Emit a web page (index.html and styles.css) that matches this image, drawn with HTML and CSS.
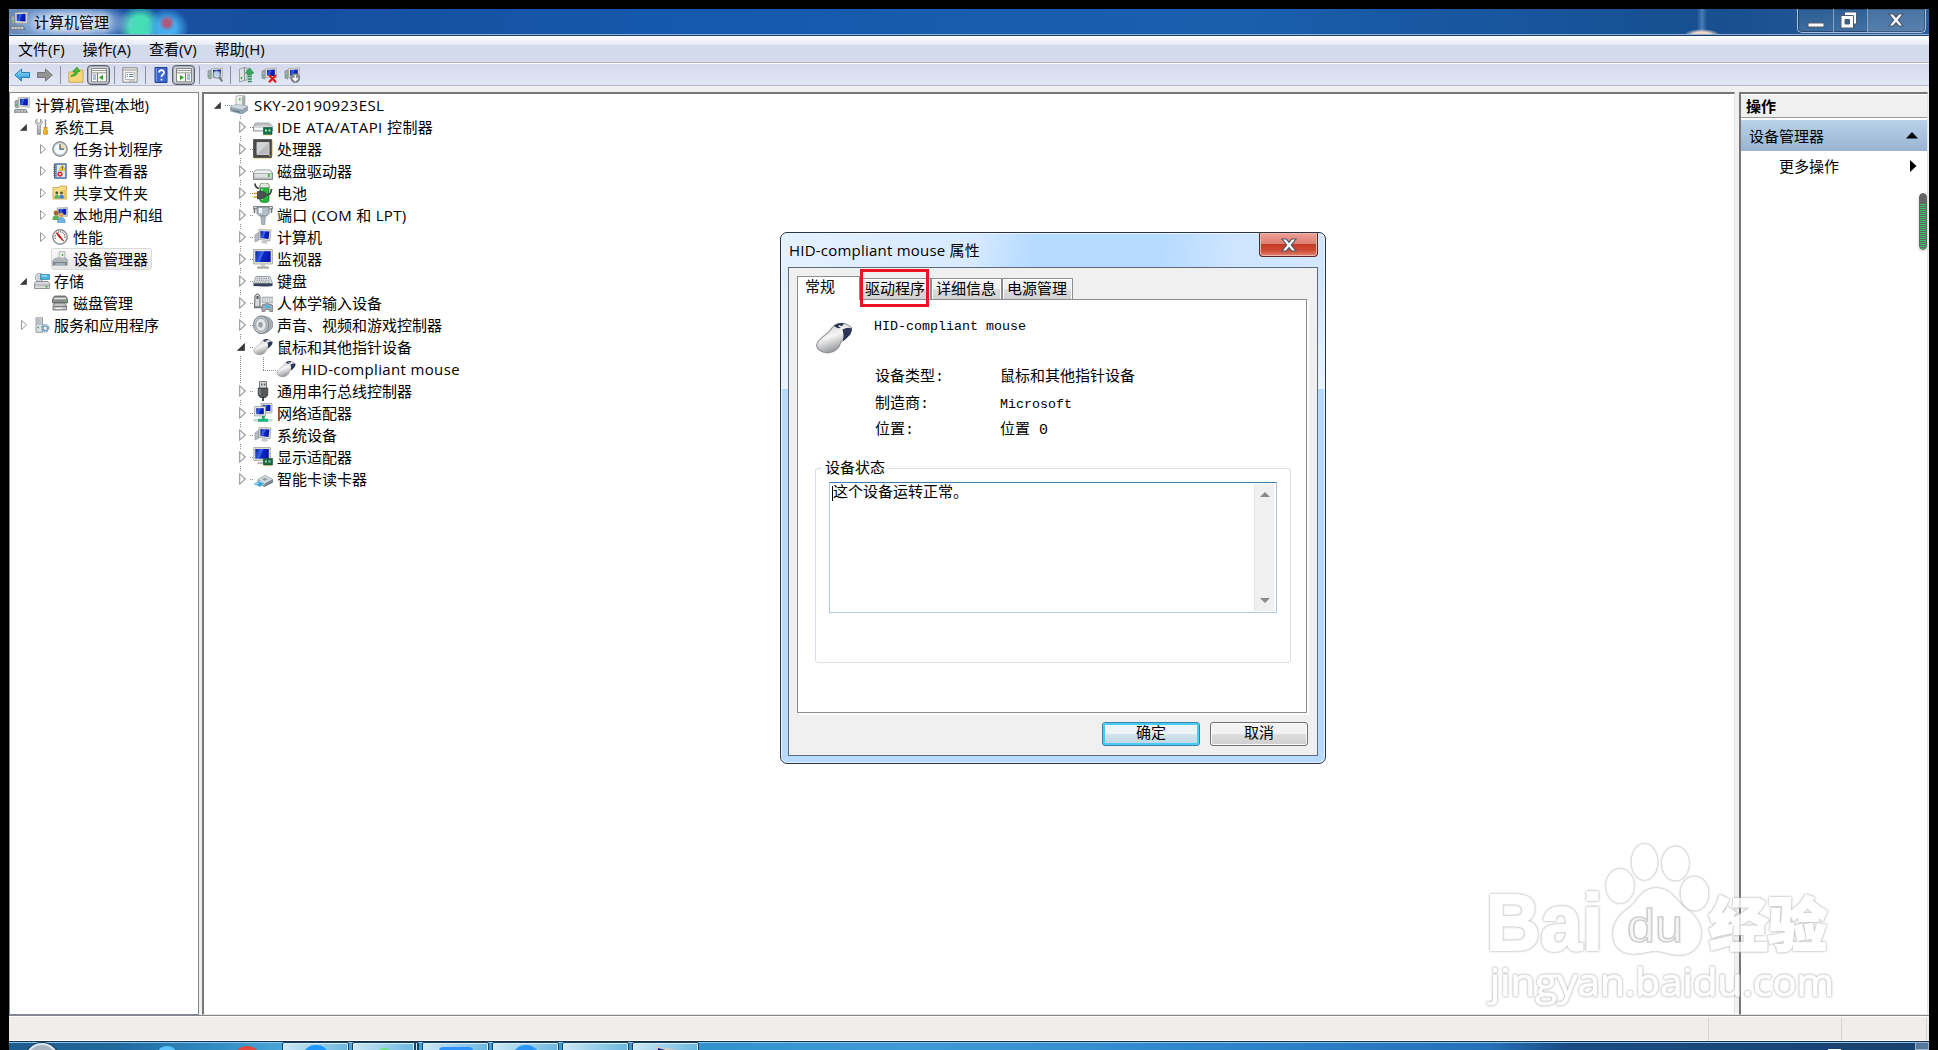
FILE: index.html
```html
<!DOCTYPE html>
<html lang="zh-CN">
<head>
    <meta charset="UTF-8">
    <title>计算机管理</title>
    <link rel="stylesheet" href="styles.css">
</head>
<body>
    <svg class="defs" width="0" height="0">
        <defs>
            <linearGradient id="gBlue" x1="0" y1="0" x2="1" y2="0.3"><stop offset="0" stop-color="#0a1a9c"/><stop offset="0.5" stop-color="#3a6cf0"/><stop offset="0.55" stop-color="#1028c8"/><stop offset="1" stop-color="#0818a8"/></linearGradient>
            <linearGradient id="gGrey" x1="0" y1="0" x2="0" y2="1"><stop offset="0" stop-color="#f4f4f4"/><stop offset="1" stop-color="#9c9fa3"/></linearGradient>
            <linearGradient id="gMouse" x1="0.2" y1="0" x2="0.6" y2="1"><stop offset="0" stop-color="#c9cacc"/><stop offset="0.45" stop-color="#f6f6f6"/><stop offset="1" stop-color="#85878c"/></linearGradient>
            <linearGradient id="gArrow" x1="0" y1="0" x2="0" y2="1"><stop offset="0" stop-color="#9fe0fb"/><stop offset="1" stop-color="#1a8fd6"/></linearGradient>
        </defs>
        <symbol id="computer" viewBox="0 0 16 16">
            <path d="M1 4l3-1v8l-3-1z" fill="#a8b0b8" stroke="#6d747c" stroke-width=".6"/><path d="M1.5 8h1.5" stroke="#3fc23f" stroke-width="1.4"/>
            <path d="M4.5.6L15.4 0v10.3l-10.9-.6z" fill="#dcdcd4" stroke="#9a9a92" stroke-width=".6"/>
            <path d="M6 2l7.8-.4v6.8L6 8z" fill="url(#gBlue)"/>
            <path d="M1 12.6h11l1.4 3H0z" fill="#8d9499" stroke="#60676c" stroke-width=".6"/><path d="M1.5 13.6h10.6M1.2 14.8h11.2" stroke="#dfe3e6" stroke-width=".7" stroke-dasharray="2 .8"/>
        </symbol>
        <symbol id="system" viewBox="0 0 20 20">
            <path d="M2 8l4-3v8l-4 2z" fill="#b6bcc4" stroke="#868d95" stroke-width=".6"/>
            <path d="M6 2.4L18 3l-1 11-11-1.6z" fill="#dcdcda" stroke="#a0a09c" stroke-width=".7"/>
            <path d="M7.4 4l9 .5-.8 7.5-8.2-1.1z" fill="url(#gBlue)"/><path d="M9 13.5l5 .7 1 2-4 .6-3-1.4z" fill="#c4c8cc"/>
        </symbol>
        <symbol id="tools" viewBox="0 0 16 16">
            <path d="M3 0C1 1 1 5 3.4 6v9.4h3V6C9 5 8.600 1 6.500 0v3.500l-1.700.8L3 3.500z" fill="url(#gGrey)" stroke="#7d8084" stroke-width=".7"/>
            <path d="M11.500.5v8" stroke="#8b8f94" stroke-width="1.400"/><path d="M9.800 8.500h3.500l-.5 2 .7 1v3.500q-2 1.500-4 0v-3.500l.8-1z" fill="#f2b21c" stroke="#b87a08" stroke-width=".6"/>
        </symbol>
        <symbol id="clock" viewBox="0 0 16 16">
            <circle cx="8" cy="8" r="7.300" fill="#b8bcc0" stroke="#7f8488" stroke-width="1"/><circle cx="8" cy="8" r="5.800" fill="#f4f9fd"/><path d="M8 8V2.500A5.500 5.500 0 0 1 13.500 8z" fill="#f3dca3"/><path d="M8 3v5.200h4" fill="none" stroke="#3c5a78" stroke-width="1.200"/>
        </symbol>
        <symbol id="events" viewBox="0 0 16 16">
            <path d="M2.500.8h11.700v14.500H2.500z" fill="#7ba0ce" stroke="#4b6c9a"/><path d="M5 2h8v12H5z" fill="#dce9f7"/><path d="M1.500 2.500h2m-2 2h2m-2 2h2m-2 2h2m-2 2h2m-2 2h2" stroke="#555" stroke-width=".9"/>
            <path d="M10.300 1.500L13.500 7.500H7z" fill="#ffd83a" stroke="#c79300" stroke-width=".5"/><path d="M10.400 3.700v2m0 .7v.7" stroke="#333"/><circle cx="8" cy="11" r="2.600" fill="#e02828"/><path d="M7 10l2 2m0-2l-2 2" stroke="#fff" stroke-width=".8"/>
        </symbol>
        <symbol id="shared" viewBox="0 0 16 16">
            <path d="M1 2.500h6l1-1.500h6.500v13H1z" fill="#f7dc88" stroke="#c99d3a" stroke-width=".8"/><path d="M11 4l4 1v9h-3z" fill="#eec75c"/>
            <circle cx="4.800" cy="7.800" r="1.400" fill="#4c4b35"/><circle cx="9.500" cy="7.800" r="1.400" fill="#4c4b35"/><path d="M2.500 13.500q0-4 2.300-4t2.300 4z" fill="#55b06a"/><path d="M7.300 13.500q0-4 2.300-4t2.300 4z" fill="#3f7fd0"/>
        </symbol>
        <symbol id="users" viewBox="0 0 16 16">
            <path d="M5 1l10.500-.6v9L5 9z" fill="#d8dad6" stroke="#999" stroke-width=".6"/><path d="M6.500 2.200l7.700-.4v6L6.500 7.600z" fill="url(#gBlue)"/>
            <circle cx="4" cy="6" r="2.400" fill="#a56a2c"/><circle cx="9.300" cy="8" r="2.400" fill="#d9a35a"/><path d="M.5 13q0-5 3.500-4.700T7.300 13z" fill="#5dae58"/><path d="M5.500 15.500q0-5 3.800-5t4 5z" fill="#6fb4e6" stroke="#3c77aa" stroke-width=".5"/>
        </symbol>
        <symbol id="perf" viewBox="0 0 16 16">
            <circle cx="8" cy="8" r="7.200" fill="#fff" stroke="#8b9095" stroke-width="1.500"/><path d="M3.500 10A5 5 0 1 1 12.500 10" fill="none" stroke="#3b3b3b" stroke-width="1" stroke-dasharray="1.500 1"/><path d="M4.500 4l2 1 5 7-4.500-4z" fill="#e22" stroke="#c01818"/>
        </symbol>
        <symbol id="devmgr" viewBox="0 0 16 16">
            <path d="M7 .7h6v8H7z" fill="#eceeef" stroke="#999" stroke-width=".7"/><path d="M10.500 3v2" stroke="#2fb22f" stroke-width="1.300"/><path d="M1.500 9l2-2h10l2 2z" fill="#c6cbd0" stroke="#7e868d" stroke-width=".6"/>
            <path d="M.5 9h15v5.500H.5z" fill="#7a828a"/><path d="M1 10h14" stroke="#e4e8eb"/><path d="M3 13h10" stroke="#b7d3dd" stroke-width="1.200"/>
        </symbol>
        <symbol id="storage" viewBox="0 0 16 16">
            <circle cx="5.500" cy="4.500" r="4.200" fill="#d4dadd" stroke="#8a8f92" stroke-width=".7"/><circle cx="5.500" cy="4.500" r="1.200" fill="#fff" stroke="#777" stroke-width=".5"/><path d="M6.500 1.500h9v5h-9z" fill="#44b6e0" stroke="#3a7e9c" stroke-width=".7"/><path d="M8 3h5" stroke="#bfeeff"/>
            <path d="M2 8.500h12l1.500 2v5H.5v-5z" fill="#d8dadc" stroke="#777c80" stroke-width=".8"/><path d="M1 12h14" stroke="#8e9397" stroke-width=".8"/><path d="M11.500 13.700h2" stroke="#2ab32a" stroke-width="1.500"/>
        </symbol>
        <symbol id="diskmgr" viewBox="0 0 16 16">
            <path d="M2.500 1h11l2 3v4H.5V4z" fill="#888b8e" stroke="#555" stroke-width=".7"/><path d="M2 3.500h12" stroke="#e8e8e8" stroke-width="1.500"/><path d="M11 6.300h2.500" stroke="#52cc3e" stroke-width="1.300"/>
            <path d="M2.500 8h10l2 3v4H1v-4z" fill="#c2c4c6" stroke="#555" stroke-width=".7"/><path d="M1.500 11.500H14" stroke="#777"/><path d="M4 13.300h6" stroke="#fff"/>
        </symbol>
        <symbol id="services" viewBox="0 0 16 16">
            <path d="M2 .8h6.500v14.500H2z" fill="#dde1e5" stroke="#81878d" stroke-width=".8"/><path d="M3 3h4.500M3 5h4.500M3 7h4.500" stroke="#7b8e9c" stroke-width=".8"/><path d="M3.500 10.500h1.500" stroke="#2dad2d" stroke-width="1.300"/>
            <circle cx="11.300" cy="11.300" r="3.200" fill="none" stroke="#8fb1d0" stroke-width="2.400" stroke-dasharray="1.700 .8"/><circle cx="11.300" cy="11.300" r="2.300" fill="#eef5fb" stroke="#7596b5" stroke-width="1.200"/>
        </symbol>
        <symbol id="host" viewBox="0 0 20 20">
            <path d="M7 1l7-.8 2 1v11l-9 .5z" fill="#eceded" stroke="#9b9fa3" stroke-width=".7"/><path d="M13 1.500l3-.5v11.500l-3 .5z" fill="#a9adb1"/><path d="M10.800 3.500v1.800" stroke="#23b323" stroke-width="1.600"/>
            <path d="M1.500 12l5-2.500 12 1.500v4.500L13 19 1.500 16z" fill="#93a5b0" stroke="#768894" stroke-width=".6"/><path d="M1.500 12l5-2.500 12 1.500-5.500 3.500z" fill="#ccd8de"/><path d="M4 15.500l7 1.700" stroke="#5d7280"/>
        </symbol>
        <symbol id="ide" viewBox="0 0 20 20">
            <path d="M2.500 6h14l3 3.500V14h-19V9.500z" fill="#d5d7d9" stroke="#85898d" stroke-width=".8"/><path d="M1 9.300q9-2.300 18 0l-2-2.800H3z" fill="#b9bcbf"/><path d="M1.500 11h9v2h-9z" fill="#fafafa"/>
            <path d="M10.500 10.500h8.500v7h-8.500z" fill="#14704a" stroke="#0c4e33" stroke-width=".6"/><path d="M12 12.500h2v2h-2zM15.500 12.500h2v2h-2z" fill="#a8e6b4"/><path d="M12 18h6" stroke="#d4b032" stroke-width="1.200" stroke-dasharray="1 .7"/>
        </symbol>
        <symbol id="cpu" viewBox="0 0 20 20">
            <path d="M1.500 19h16.500M19.300 1.500v16" stroke="#d7a52e" stroke-width="1.300" stroke-dasharray="1 1"/><path d="M.5.5h18v18H.5z" fill="#4a4a4a" stroke="#333" stroke-width=".6"/><path d="M4 3.500h12v12H4z" fill="#b9bbbd" stroke="#e2e2e2" stroke-width=".8"/><path d="M4 15.500v-12h12z" fill="#d2d3d5"/><circle cx="16.700" cy="16.500" r=".8" fill="#e8b53a"/>
        </symbol>
        <symbol id="disk" viewBox="0 0 20 20">
            <path d="M3 9h14l2.500 3v6.500h-19V12z" fill="#cfd1d3" stroke="#7b7f83" stroke-width=".9"/><path d="M3 9.500h14l2 2.500H1z" fill="#f0f1f1"/><path d="M1 12.500h18V17H1z" fill="#dfe0e2" stroke="#909396" stroke-width=".6"/><path d="M15.800 13v3" stroke="#35b934" stroke-width="1.800"/>
        </symbol>
        <symbol id="battery" viewBox="0 0 20 20">
            <path d="M7 2q0-2 4.500-2T16 2v15.500q0 2-4.500 2T7 17.500z" fill="#27b33b" stroke="#187224" stroke-width=".7"/><path d="M7 2q0-2 4.500-2T16 2v2.500H7z" fill="#e4e8e4" stroke="#888" stroke-width=".6"/><path d="M9 6v11" stroke="#93ef8c" stroke-width="1.800"/>
            <path d="M.5 10.500h4.500M.5 14h4.500" stroke="#d1a425" stroke-width="1.500"/><path d="M4.500 8.500q6-2 9 3-2 5-9 4.500z" fill="#4d5154" stroke="#232526" stroke-width=".6"/><path d="M13 11.500q5 1.500 5.500-5.500M2 .5q0 4 4 5" fill="none" stroke="#3f4345" stroke-width="1.800"/>
        </symbol>
        <symbol id="port" viewBox="0 0 20 20">
            <path d="M.5 1.500h19v2.500H.5z" fill="#d8dcdf" stroke="#6c7278" stroke-width=".8"/><path d="M4 2h12v6.500l-2.500 2.500h-7L4 8.500z" fill="#b4bfc8" stroke="#66717a" stroke-width=".8"/><path d="M6 3v5h3V3z" fill="#f1f5f8"/><path d="M1.500 3v5m17-5v5" stroke="#6e7479" stroke-width="1.500"/><path d="M7.800 11h4.500l-.5 8.500h-3z" fill="#aab5bd" stroke="#78838b" stroke-width=".6"/>
        </symbol>
        <symbol id="monitor" viewBox="0 0 20 20">
            <path d="M.5.5h19v14.500H.5z" fill="#dcdcd6" stroke="#a4a49d" stroke-width=".8"/><path d="M2.300 2.200h15.400v10.800H2.300z" fill="url(#gBlue)"/><path d="M8 15h4v2h3l1 2.300H4L5 17h3z" fill="#c8c8c2"/><path d="M4 19h12" stroke="#8f8f89"/>
        </symbol>
        <symbol id="keyboard" viewBox="0 0 20 20">
            <path d="M3 5.500h14l2.500 7H.5z" fill="#e5e7ea" stroke="#858a92" stroke-width=".8"/><path d="M.5 12.500h19v2.500q-9.500 1-19 0z" fill="#33415a"/><path d="M4 7.300h12.500M3.500 9.200h13.500M2.500 11.100h15" stroke="#686d77" stroke-width=".9" stroke-dasharray="1.200 1"/>
        </symbol>
        <symbol id="hid" viewBox="0 0 20 20">
            <path d="M9 4h11v6H9z" fill="#bfc2c6" stroke="#8d9196" stroke-width=".5"/><path d="M9.500 6h10M9.500 8h10" stroke="#fff" stroke-width=".9" stroke-dasharray="1.200 .6"/>
            <path d="M2 3q2-4 5 0v11H1.500z" fill="#d6dadd" stroke="#5d6266" stroke-width="1"/><path d="M3.500 3h2v3h-2z" fill="#4e545a"/><path d="M1 14.500h8" stroke="#777" stroke-width="1.500"/>
            <path d="M9 12q5-3 10.500 0l.3 6.500h-3l-1-2h-3l-1 2H9z" fill="#a4a9ae" stroke="#676c71" stroke-width=".7"/><path d="M12 12h4.500v3H12z" fill="#48b9e8"/>
        </symbol>
        <symbol id="sound" viewBox="0 0 20 20">
            <path d="M8 1q9 0 11.500 6v5Q16 18 9 18.500z" fill="#a7acb0" stroke="#7d8286" stroke-width=".7"/><ellipse cx="8" cy="9.800" rx="7.500" ry="8.800" fill="#c3c8cb" stroke="#7a7f83"/><ellipse cx="8" cy="9.800" rx="5.300" ry="6.500" fill="#e3e6e8" stroke="#888d91" stroke-width=".8"/><ellipse cx="7.500" cy="9.800" rx="2.200" ry="2.800" fill="#979ea3"/>
        </symbol>
        <symbol id="mouse" viewBox="0 0 20 20">
            <path d="M.8 14C1 11 5 9 7.500 6.500 9 4.500 10 3 12 2.500Q16 1.500 19.200 4.500L18.500 8Q15 9.500 13.500 12.500 12 17.300 7 17.800 1.500 17.500.8 14z" fill="url(#gMouse)" stroke="#909296" stroke-width=".6"/>
            <path d="M14.500 5.500q2.500-1.500 5-.5.2 3-4.800 6.800.8-3.300-.2-6.300z" fill="#2b3555"/><path d="M9.800 3.500q3-2 5.500-1.200l-1.500 2q-1.500 1-2.500.2z" fill="#2b3555"/><path d="M12.500 3.500l3 1.500" stroke="#eee" stroke-width=".9"/>
        </symbol>
        <symbol id="usb" viewBox="0 0 20 20">
            <path d="M6.500.5h7v7h-7z" fill="#d9dbdd" stroke="#777"/><path d="M8 2.500h1.500v2H8zM10.800 2.500h1.500v2h-1.500z" fill="#555"/><path d="M5.200 7h9.600v7l-2 2.500H7.200l-2-2.500z" fill="#55585b" stroke="#313335" stroke-width=".7"/><path d="M7 8v6" stroke="#8b8e91" stroke-width="1.200"/><path d="M10 16v4" stroke="#333" stroke-width="1.800"/>
        </symbol>
        <symbol id="network" viewBox="0 0 20 20">
            <path d="M8 .5h11v9.500H8z" fill="#d8dad8" stroke="#969894" stroke-width=".7"/><path d="M9.600 2h7.800v6H9.600z" fill="url(#gBlue)"/><path d="M1.500 3.500h11V13h-11z" fill="#e4e6e4" stroke="#969894" stroke-width=".7"/><path d="M3.200 5.200h7.600v6H3.200z" fill="url(#gBlue)"/><path d="M8.800 13h3v3h-3z" fill="#259f62"/><path d="M.5 15.800h19v2.700H.5z" fill="#c7d9d2"/><path d="M5 15.800h10v3H5z" fill="#16b878"/>
        </symbol>
        <symbol id="display" viewBox="0 0 20 20">
            <path d="M.8.5h16.500v13H.8z" fill="#dcdcd6" stroke="#a4a49d" stroke-width=".8"/><path d="M2.300 2h13.500v9.700H2.300z" fill="url(#gBlue)"/><path d="M5 15h6l1 2H4z" fill="#b9b9b5"/><path d="M10.500 11.500h9v6.500h-9z" fill="#1b6849" stroke="#0e4830" stroke-width=".6"/><path d="M12 13.500h2v2h-2zM15.500 13.500h2v2h-2z" fill="#94cfa4"/><path d="M12 18.800h6" stroke="#d4b032" stroke-dasharray="1 .7"/>
        </symbol>
        <symbol id="card" viewBox="0 0 20 20">
            <path d="M5 10.500l7-4 7.500 4v3l-8 4-6.500-3z" fill="#7f868b" stroke="#5f666c" stroke-width=".7"/><path d="M5 10.500l7-4 7.500 4-8 4z" fill="#d3d8db"/><path d="M9 10.200l3-1.500 3 1.500-3 1.500z" fill="#8f979d"/><path d="M.5 15l5-3 6.500 2.500-5 3.500z" fill="#3aa4dd" stroke="#d6eefb" stroke-width=".7"/><path d="M3.500 15l2-1" stroke="#fff"/>
        </symbol>
        <symbol id="back" viewBox="0 0 16 16"><path d="M.8 8l6.700-6v3.500h8v5h-8V14z" fill="url(#gArrow)" stroke="#2b7fb8"/></symbol>
        <symbol id="forward" viewBox="0 0 16 16"><path d="M15.300 8l-6.800-6v3.500h-8v5h8V14z" fill="#949494" stroke="#777"/></symbol>
        <symbol id="folderup" viewBox="0 0 16 16"><path d="M.8 5h8l1.500-2H15v12.300H.8z" fill="#f5d67b" stroke="#c9a044" stroke-width=".8"/><path d="M3 8.500q4-1 4-4H4.800L9 0l3 4.500H10Q9.500 9 3 9.500z" fill="#46bd31" stroke="#25821a" stroke-width=".6"/></symbol>
        <symbol id="panel" viewBox="0 0 16 16"><path d="M.5 1.500h15v13.300H.5z" fill="#f7f7f4" stroke="#858585"/><path d="M.8 3.500h14.500M.8 5.800h14.500" stroke="#999"/><path d="M2 8h3M2 10h3M2 12h3" stroke="#5d87b8"/><path d="M6.500 6v8.500" stroke="#777"/><path d="M12 8v5l-4-2.500z" fill="#2aa52a"/></symbol>
        <symbol id="panelr" viewBox="0 0 16 16"><path d="M.5 1.500h15v13.300H.5z" fill="#f7f7f4" stroke="#858585"/><path d="M.8 3.500h14.500M.8 5.800h14.500" stroke="#999"/><path d="M11 8h3M11 10h3M11 12h3" stroke="#5d87b8"/><path d="M9.500 6v8.500" stroke="#777"/><path d="M4 8v5l4-2.500z" fill="#2aa52a"/></symbol>
        <symbol id="props" viewBox="0 0 16 16"><path d="M.8.800h14.400v14.400H.8z" fill="#f2f2ee" stroke="#888"/><path d="M1 3h14" stroke="#b5b5b5" stroke-width="1.500"/><path d="M3.500 5.500h9.300v7H3.500z" fill="#fff" stroke="#a3a3a3" stroke-width=".8"/><path d="M5 7.500h1m1 0h4.500M5 9.500h1m1 0h4.500" stroke="#62809f"/><path d="M7 14h6" stroke="#aaa"/></symbol>
        <symbol id="help" viewBox="0 0 16 16"><path d="M2 .5h12v15H2z" fill="#3b66cc" stroke="#213f91"/><path d="M3.300 1v14" stroke="#7da0ed"/><path d="M6 5.500q.3-2.300 2.500-2.300T11 5.500q0 1.500-1.500 2.300-1 .6-1 2.200m0 1.700v1.700" fill="none" stroke="#fff" stroke-width="1.700"/></symbol>
        <symbol id="scan" viewBox="0 0 16 16"><path d="M1 4l3-1v9l-3-1z" fill="#a8b0b8" stroke="#6d747c" stroke-width=".6"/><path d="M1.500 9h1.500" stroke="#3fc23f" stroke-width="1.400"/><path d="M4.500 1.600L15.400 1v10l-10.900-.6z" fill="#dcdcd4" stroke="#9a9a92" stroke-width=".6"/><path d="M6 3l7.800-.4v6.500L6 8.800z" fill="url(#gBlue)"/><circle cx="9.800" cy="7.500" r="3.500" fill="#d2e9fa" fill-opacity=".85" stroke="#7e8a96" stroke-width="1.200"/><path d="M12.300 10.300l3 4" stroke="#777" stroke-width="2"/></symbol>
        <symbol id="update" viewBox="0 0 16 16"><path d="M1.500 2l5-1.500v13L1.500 15zM6.500.5L9 1v12l-2.500.5z" fill="#dde0e2" stroke="#80868a" stroke-width=".7"/><path d="M3.500 10v2" stroke="#2aa52a" stroke-width="1.300"/><path d="M11.500.8l4.300 5.400h-2.300V8H9.800V6.200H7.500z" fill="#3aa862" stroke="#187a40" stroke-width=".6"/><path d="M9.800 9.500h4M9.800 12h4M9.800 14.500h4" stroke="#238a4b" stroke-width="1.500"/></symbol>
        <symbol id="uninstall" viewBox="0 0 16 16"><path d="M1 4l3-1v9l-3-1z" fill="#a8b0b8" stroke="#6d747c" stroke-width=".6"/><path d="M1.500 9h1.500" stroke="#3fc23f" stroke-width="1.400"/><path d="M4.500 1.600L15.400 1v10l-10.900-.6z" fill="#dcdcd4" stroke="#9a9a92" stroke-width=".6"/><path d="M6 3l7.800-.4v6.500L6 8.800z" fill="url(#gBlue)"/><path d="M8 8l7 7.300m0-7.300L8 15.300" stroke="#e01b1b" stroke-width="2.200"/></symbol>
        <symbol id="disable" viewBox="0 0 16 16"><path d="M1 4l3-1v9l-3-1z" fill="#a8b0b8" stroke="#6d747c" stroke-width=".6"/><path d="M1.500 9h1.500" stroke="#3fc23f" stroke-width="1.400"/><path d="M4.500 1.600L15.400 1v10l-10.900-.6z" fill="#dcdcd4" stroke="#9a9a92" stroke-width=".6"/><path d="M6 3l7.800-.4v6.500L6 8.800z" fill="url(#gBlue)"/><circle cx="11.300" cy="11" r="4.600" fill="#8a8d8f" stroke="#65686a" stroke-width=".7"/><path d="M11.300 8v5.500M8.800 11l2.500 2.700 2.500-2.700" fill="none" stroke="#fff" stroke-width="1.500"/></symbol>
        <symbol id="closed" viewBox="0 0 8 12"><path d="M1.500 1.500v9L6.500 6z" fill="#fff" stroke="#989898" stroke-width="1"/></symbol>
        <symbol id="open" viewBox="0 0 8 8"><path d="M7.500.5v7H.5z" fill="#3a3a3a" stroke="#222" stroke-width=".6"/></symbol>
        <symbol id="cross" viewBox="0 0 16 14"><path d="M1 1h4.300L8 4.200 10.700 1H15l-4.700 6L15 13h-4.300L8 9.800 5.300 13H1l4.700-6z" fill="#fff" stroke="#50586c" stroke-width="1.200"/></symbol>
    </svg>

    <div class="window">
        <div class="titlebar">
            <svg class="icon title-icon"><use href="#computer"/></svg>
            <span class="title">计算机管理</span>
            <div class="controls">
                <span class="ctl ctl-min"><svg width="18" height="6"><path d="M1 1h16v4H1z" fill="#fff" stroke="#50586c"/></svg></span>
                <span class="ctl ctl-max"><svg width="18" height="18"><path d="M4.500 1h12v12h-12z" fill="#fff" stroke="#50586c"/><path d="M1 4.500h12.500V17H1z" fill="#fff" stroke="#50586c"/><path d="M5 8.500h4.500v4.500H5z" fill="#3b6496" stroke="#50586c"/></svg></span>
                <span class="ctl ctl-close"><svg width="16" height="14"><use href="#cross"/></svg></span>
            </div>
        </div>
        <div class="menubar">
            <span>文件(F)</span><span>操作(A)</span><span>查看(V)</span><span>帮助(H)</span>
        </div>
        <div class="toolbar">
            <span class="tool"><svg class="icon"><use href="#back"/></svg></span>
            <span class="tool"><svg class="icon"><use href="#forward"/></svg></span>
            <span class="sep"></span>
            <span class="tool"><svg class="icon"><use href="#folderup"/></svg></span>
            <span class="tool pressed"><svg class="icon"><use href="#panel"/></svg></span>
            <span class="sep"></span>
            <span class="tool"><svg class="icon"><use href="#props"/></svg></span>
            <span class="sep"></span>
            <span class="tool"><svg class="icon"><use href="#help"/></svg></span>
            <span class="tool pressed"><svg class="icon"><use href="#panelr"/></svg></span>
            <span class="sep"></span>
            <span class="tool"><svg class="icon"><use href="#scan"/></svg></span>
            <span class="sep"></span>
            <span class="tool"><svg class="icon"><use href="#update"/></svg></span>
            <span class="tool"><svg class="icon"><use href="#uninstall"/></svg></span>
            <span class="tool"><svg class="icon"><use href="#disable"/></svg></span>
        </div>

        <div class="main">
            <div class="pane nav">
                <div class="row root"><svg class="icon"><use href="#computer"/></svg><span>计算机管理(本地)</span></div>
                <div class="row l1"><svg class="open"><use href="#open"/></svg><svg class="icon"><use href="#tools"/></svg><span>系统工具</span></div>
                <div class="row l2"><svg class="closed"><use href="#closed"/></svg><svg class="icon"><use href="#clock"/></svg><span>任务计划程序</span></div>
                <div class="row l2"><svg class="closed"><use href="#closed"/></svg><svg class="icon"><use href="#events"/></svg><span>事件查看器</span></div>
                <div class="row l2"><svg class="closed"><use href="#closed"/></svg><svg class="icon"><use href="#shared"/></svg><span>共享文件夹</span></div>
                <div class="row l2"><svg class="closed"><use href="#closed"/></svg><svg class="icon"><use href="#users"/></svg><span>本地用户和组</span></div>
                <div class="row l2"><svg class="closed"><use href="#closed"/></svg><svg class="icon"><use href="#perf"/></svg><span>性能</span></div>
                <div class="row leaf"><div class="selected"><svg class="icon"><use href="#devmgr"/></svg><span>设备管理器</span></div></div>
                <div class="row l1"><svg class="open"><use href="#open"/></svg><svg class="icon"><use href="#storage"/></svg><span>存储</span></div>
                <div class="row leaf"><div class="plain"><svg class="icon"><use href="#diskmgr"/></svg><span>磁盘管理</span></div></div>
                <div class="row l1"><svg class="closed"><use href="#closed"/></svg><svg class="icon"><use href="#services"/></svg><span>服务和应用程序</span></div>
            </div>

            <div class="pane devices">
                <div class="row host"><svg class="open"><use href="#open"/></svg><i class="dots"></i><svg class="icon20"><use href="#host"/></svg><span class="host-name">SKY-20190923ESL</span></div>
                <div class="row dev"><b class="twig"><svg class="closed"><use href="#closed"/></svg></b><i class="dots"></i><svg class="icon20"><use href="#ide"/></svg><span class="ide-name">IDE ATA/ATAPI 控制器</span></div>
                <div class="row dev"><b class="twig"><svg class="closed"><use href="#closed"/></svg></b><i class="dots"></i><svg class="icon20"><use href="#cpu"/></svg><span>处理器</span></div>
                <div class="row dev"><b class="twig"><svg class="closed"><use href="#closed"/></svg></b><i class="dots"></i><svg class="icon20"><use href="#disk"/></svg><span>磁盘驱动器</span></div>
                <div class="row dev"><b class="twig"><svg class="closed"><use href="#closed"/></svg></b><i class="dots"></i><svg class="icon20"><use href="#battery"/></svg><span>电池</span></div>
                <div class="row dev"><b class="twig"><svg class="closed"><use href="#closed"/></svg></b><i class="dots"></i><svg class="icon20"><use href="#port"/></svg><span class="port-name">端口 (COM 和 LPT)</span></div>
                <div class="row dev"><b class="twig"><svg class="closed"><use href="#closed"/></svg></b><i class="dots"></i><svg class="icon20"><use href="#system"/></svg><span>计算机</span></div>
                <div class="row dev"><b class="twig"><svg class="closed"><use href="#closed"/></svg></b><i class="dots"></i><svg class="icon20"><use href="#monitor"/></svg><span>监视器</span></div>
                <div class="row dev"><b class="twig"><svg class="closed"><use href="#closed"/></svg></b><i class="dots"></i><svg class="icon20"><use href="#keyboard"/></svg><span>键盘</span></div>
                <div class="row dev"><b class="twig"><svg class="closed"><use href="#closed"/></svg></b><i class="dots"></i><svg class="icon20"><use href="#hid"/></svg><span>人体学输入设备</span></div>
                <div class="row dev"><b class="twig"><svg class="closed"><use href="#closed"/></svg></b><i class="dots"></i><svg class="icon20"><use href="#sound"/></svg><span>声音、视频和游戏控制器</span></div>
                <div class="row dev"><b class="twig"><svg class="open"><use href="#open"/></svg></b><i class="dots"></i><svg class="icon20"><use href="#mouse"/></svg><span>鼠标和其他指针设备</span></div>
                <div class="row dev sub"><i class="elbow"></i><svg class="icon20"><use href="#mouse"/></svg><span class="mouse-name">HID-compliant mouse</span></div>
                <div class="row dev"><b class="twig"><svg class="closed"><use href="#closed"/></svg></b><i class="dots"></i><svg class="icon20"><use href="#usb"/></svg><span>通用串行总线控制器</span></div>
                <div class="row dev"><b class="twig"><svg class="closed"><use href="#closed"/></svg></b><i class="dots"></i><svg class="icon20"><use href="#network"/></svg><span>网络适配器</span></div>
                <div class="row dev"><b class="twig"><svg class="closed"><use href="#closed"/></svg></b><i class="dots"></i><svg class="icon20"><use href="#system"/></svg><span>系统设备</span></div>
                <div class="row dev"><b class="twig"><svg class="closed"><use href="#closed"/></svg></b><i class="dots"></i><svg class="icon20"><use href="#display"/></svg><span>显示适配器</span></div>
                <div class="row dev last"><b class="twig"><svg class="closed"><use href="#closed"/></svg></b><i class="dots"></i><svg class="icon20"><use href="#card"/></svg><span>智能卡读卡器</span></div>
            </div>

            <div class="pane actions">
                <div class="actions-head">操作</div>
                <div class="actions-group"><span>设备管理器</span><svg width="12" height="7"><path d="M6 0l6 6.500H0z"/></svg></div>
                <div class="actions-item"><span>更多操作</span><svg width="7" height="12"><path d="M0 0l6.500 6L0 12z"/></svg></div>
            </div>
        </div>

        <div class="statusbar"><span class="cell cell-a"></span><span class="cell cell-b"></span><span class="cell cell-c"></span></div>
        <div class="taskbar">
            <span class="orb"></span><span class="pin pin-blue"></span><span class="pin pin-red"></span>
            <div class="tasks">
                <span class="task"><i class="round"></i></span>
                <span class="task stacked"><i class="green"></i></span>
                <span class="task"><i class="square"></i></span>
                <span class="task"><i class="round light"></i></span>
                <span class="task"></span>
                <span class="task"><svg width="24" height="6"><path d="M2 0l22 4v2H2z" fill="#ccc"/><path d="M4 2l14 4H4z" fill="#0a1a9c"/></svg></span>
            </div>
            <span class="tray"></span>
            <span class="show-desktop"></span>
        </div>
    </div>

    <div class="meter"></div>

    <div class="dialog">
        <div class="dialog-title"><span>HID-compliant mouse 属性</span><div class="dialog-close"><svg width="16" height="14"><use href="#cross"/></svg></div></div>
        <div class="dialog-body">
            <div class="tabs">
                <span class="tab active">常规</span>
                <span class="tab">驱动程序</span>
                <span class="tab">详细信息</span>
                <span class="tab">电源管理</span>
            </div>
            <div class="page">
                <div class="device">
                    <svg class="big"><use href="#mouse"/></svg>
                    <span class="mono">HID-compliant mouse</span>
                </div>
                <div class="facts">
                    <span>设备类型:</span><span>鼠标和其他指针设备</span>
                    <span>制造商:</span><span class="mono">Microsoft</span>
                    <span>位置:</span><span>位置 0</span>
                </div>
                <fieldset class="status">
                    <legend>设备状态</legend>
                    <div class="status-text">
                        <span class="message">这个设备运转正常。</span>
                        <div class="scroll"><svg width="10" height="5"><path d="M5 0l5 5H0z" fill="#888"/></svg><svg width="10" height="5"><path d="M0 0h10L5 5z" fill="#888"/></svg></div>
                    </div>
                </fieldset>
            </div>
            <div class="buttons"><span class="btn default">确定</span><span class="btn">取消</span></div>
        </div>
        <div class="highlight"></div>
    </div>

    <svg class="watermark" width="360" height="180" viewBox="0 0 360 180">
        <g class="mark">
            <text x="6" y="110" class="wm-bai" textLength="117" lengthAdjust="spacingAndGlyphs">Bai</text>
            <ellipse cx="140" cy="46" rx="13" ry="16"/><ellipse cx="164.500" cy="22" rx="12" ry="17"/><ellipse cx="195.500" cy="23.500" rx="12.500" ry="16"/><ellipse cx="214.500" cy="53.500" rx="13" ry="16"/>
            <path d="M176 49c-14 0-17 13-28 21s-14 17-14 24c0 13 9 19 19 19 9 0 16-3 23-3s14 4 23 4c12 0 21-8 21-21 0-9-4-16-14-23s-15-21-30-21z"/>
            <text x="229" y="106" class="wm-cn" textLength="118" lengthAdjust="spacingAndGlyphs">经验</text>
            <text x="10" y="156" class="wm-url" textLength="344" lengthAdjust="spacingAndGlyphs">jingyan.baidu.com</text>
        </g>
        <text x="147" y="102" class="wm-du" textLength="56" lengthAdjust="spacingAndGlyphs">du</text>
    </svg>
</body>
</html>
```
FILE: styles.css
```css
* {
    box-sizing: border-box;
}
body {
    margin: 0;
    padding: 9px 9px 0;
    height: 1050px;
    overflow: hidden;
    background: #000;
    color: #000;
    font: 15px/22px "Open Sans", "Noto Sans CJK SC", sans-serif;
    white-space: nowrap;
}
svg {
    display: block;
    flex: none;
}
.defs {
    position: absolute;
}
.icon {
    width: 16px;
    height: 16px;
}
.icon20 {
    width: 20px;
    height: 20px;
}
.window {
    display: flex;
    flex-direction: column;
    width: 1920px;
    height: 1041px;
    background: #f0f0f0;
}

/* title bar */
.titlebar {
    display: flex;
    align-items: flex-start;
    height: 27px;
    border-bottom: 1px solid #1e3c66;
    box-shadow: inset 0 -1px 0 #8fb4dc;
    background:
        radial-gradient(ellipse 66px 20px at 62px 14px, rgba(200,216,242,.85) 30%, rgba(150,185,230,.6) 70%, transparent),
        radial-gradient(circle 8px at 158px 14px, #b0587a 40%, transparent),
        radial-gradient(ellipse 22px 20px at 158px 19px, #44aef0 40%, transparent),
        radial-gradient(ellipse 22px 22px at 131px 18px, #45ddb4 50%, transparent),
        radial-gradient(ellipse 18px 6px at 1693px 26px, #f0d8c8 50%, transparent),
        linear-gradient(90deg, transparent 1688px, rgba(120,170,215,.5) 1693px, transparent 1698px),
        linear-gradient(90deg, #6a8cba 0, #1a50a0 120px, #164f9f 300px, #1559ad 700px, #1a5fae 1200px, #175297 1600px, #184f8e 1720px, #2c5f98 1920px);
}
.title-icon {
    margin: 3px 0 0 1px;
    width: 18px;
    height: 18px;
}
.title {
    margin: 2px 0 0 6px;
    text-shadow: 0 0 6px #fff, 0 0 8px #fff;
}
.controls {
    display: flex;
    margin: 0 3px 0 auto;
    width: 129px;
    height: 24px;
    border: 1px solid #a8c0dc;
    border-top: 0;
    border-radius: 0 0 5px 5px;
    background: linear-gradient(#55809f33, #ffffff22);
    box-shadow: inset 0 0 0 1px #24466f;
}
.ctl {
    display: flex;
    justify-content: center;
    padding-top: 3px;
    border-left: 1px solid #86a6c8;
}
.ctl-min {
    width: 35px;
    padding-top: 13px;
    border-left: 0;
}
.ctl-max {
    width: 34px;
    padding: 2px 3px 0 0;
}
.ctl-close {
    flex: 1;
    padding: 4px 1px 0 0;
    background: rgba(255,255,255,.1);
}

/* menu and toolbar */
.menubar {
    display: flex;
    gap: 18px;
    height: 27px;
    padding: 2px 9px;
    border-bottom: 1px solid #b0b0b6;
    background: linear-gradient(#fff, #e4e9f5 9px, #d3daec 9px, #d5dbee);
}
.toolbar {
    display: flex;
    align-items: center;
    height: 23px;
    padding-left: 1px;
    border-top: 1px solid #fafbff;
    border-bottom: 1px solid #b4b7cd;
    background: linear-gradient(#d4daec, #e2e7f6);
}
.tool {
    display: flex;
    align-items: center;
    justify-content: center;
    width: 23px;
    height: 20px;
}
.pressed {
    border: 1px solid #5d6068;
    border-radius: 4px;
    background: #d5d8e0;
    box-shadow: inset 0 0 1px 1px #a5a8b0;
}
.sep {
    width: 1px;
    height: 18px;
    margin: 0 3px 0 4px;
    background: #8c909a;
}

/* panes */
.main {
    display: flex;
    height: 929px;
    padding-top: 6px;
}
.pane {
    background: #fff;
}
.nav {
    width: 190px;
    padding-top: 1px;
    border: 1px solid #828790;
    margin-right: 3px;
}
.devices {
    width: 1533px;
    margin-right: 4px;
}
.devices, .actions {
    border: 2px solid #777;
    border-right: 1px solid #e3e3e3;
    border-bottom: 1px solid #e3e3e3;
}
.actions {
    width: 189px;
}
.row {
    display: flex;
    align-items: center;
    height: 22px;
}
.closed {
    width: 8px;
    height: 12px;
}
.open {
    width: 7px;
    height: 7px;
}
.root {
    padding-left: 4px;
}
.root span, .l2 span {
    margin-left: 5px;
}
.l1 {
    padding-left: 10px;
}
.l1 .icon {
    margin-left: 7px;
}
.l1 .closed + .icon {
    margin-left: 6px;
}
.l1 span {
    margin-left: 4px;
}
.l2 {
    padding-left: 29px;
}
.l2 .icon {
    margin-left: 5px;
}
.leaf {
    padding-left: 41px;
}
.selected, .plain {
    display: flex;
    align-items: center;
    gap: 5px;
    height: 22px;
    padding: 0 3px 0 0;
    border: 1px solid transparent;
}
.selected {
    border-color: #d9d9d9;
    border-radius: 3px;
    background: linear-gradient(#fafafa, #e6e6e6);
}
.host {
    padding-left: 10px;
}
.host span {
    margin-left: 5px;
    letter-spacing: .45px;
}
.dots {
    width: 4px;
    height: 1px;
    background: repeating-linear-gradient(90deg, #8a8a8a 0 1px, transparent 1px 2px);
}
.host .dots {
    width: 7px;
    margin-left: 4px;
}
.host .icon20 {
    margin-left: -3px;
}
.dev {
    padding-left: 34px;
    background: repeating-linear-gradient(#8a8a8a 0 1px, transparent 1px 2px) 36px 0 / 1px 100% no-repeat;
}
.dev.last {
    background-size: 1px 8px;
}
.dev span {
    margin-left: 4px;
}
.dev .ide-name {
    letter-spacing: .4px;
}
.dev .port-name {
    letter-spacing: .3px;
}
.dev .mouse-name {
    margin-left: 5px;
    letter-spacing: .35px;
}
.twig {
    display: flex;
    align-items: center;
    width: 9px;
    height: 17px;
    background: #fff;
}
.twig .closed {
    width: 9px;
    height: 14px;
}
.twig .open {
    width: 8px;
    height: 8px;
    margin-left: -1px;
}
.twig + .dots {
    margin-left: 3px;
}
.twig + .dots + .icon20 {
    margin-left: -1px;
}
.elbow {
    width: 13px;
    height: 14px;
    margin: -10px 0 0 25px;
    background:
        repeating-linear-gradient(#8a8a8a 0 1px, transparent 1px 2px) 0 0 / 1px 100% no-repeat,
        repeating-linear-gradient(90deg, #8a8a8a 0 1px, transparent 1px 2px) 0 100% / 100% 1px no-repeat;
}
.actions-head {
    height: 24px;
    padding: 0 5px;
    border-top: 1px solid #fff;
    border-bottom: 1px solid #999;
    background: #f0f0f0;
    font-weight: bold;
}
.actions-group {
    display: flex;
    align-items: center;
    justify-content: space-between;
    height: 33px;
    padding: 0 9px 0 8px;
    border-top: 2px solid #fff;
    background: linear-gradient(#b9d1ea, #99b4d1);
}
.actions-item {
    display: flex;
    align-items: center;
    justify-content: space-between;
    height: 29px;
    padding: 0 10px 0 38px;
}

/* status bar and taskbar */
.statusbar {
    display: flex;
    height: 26px;
    border-top: 1px solid #828790;
    border-bottom: 1px solid #fff;
    box-shadow: inset 0 1px 0 #fff;
    background: #f0edeb;
}
.cell {
    height: 23px;
    margin-top: 2px;
    border-right: 1px solid #d5d3d2;
}
.cell-a {
    width: 1700px;
}
.cell-b {
    width: 133px;
}
.cell-c {
    width: 85px;
}
.taskbar {
    display: flex;
    height: 9px;
    overflow: hidden;
    border-top: 1px solid #16324e;
    box-shadow: inset 0 1px 0 #8fc3e4;
    background: linear-gradient(90deg, #1d5c8e 0, #1f699f 110px, #3492c8 220px, #4aa8da 280px, #3292d0 700px, #3d9bd8 900px, #2c82c8 1250px, #2470b9 1480px, #194b82 1560px, #17426f 1920px);
}
.orb {
    width: 34px;
    height: 34px;
    margin: 1px 0 0 16px;
    flex: none;
    border: 2px solid #dfe9f0;
    border-radius: 50%;
    background: #a8b4c0;
    box-shadow: 0 0 0 1px #1b3d5c;
}
.pin {
    flex: none;
    border-radius: 50%;
}
.pin-blue {
    width: 22px;
    height: 22px;
    margin: 4px 0 0 97px;
    background: #5cc4fb;
}
.pin-red {
    width: 28px;
    height: 28px;
    margin: 4px 0 0 55px;
    background: #e2483c;
}
.tasks {
    display: flex;
    gap: 3px;
    margin-left: 21px;
}
.task {
    display: flex;
    justify-content: center;
    width: 67px;
    height: 20px;
    border: 1px solid #1b405e;
    border-radius: 2px;
    box-shadow: inset 0 0 0 1px #d8eef9;
    background: linear-gradient(100deg, #cfe9f6, #66b6df);
}
.task svg {
    margin-top: 3px;
}
.stacked {
    border-right: 5px double #1b405e;
}
.round {
    width: 30px;
    height: 30px;
    margin-top: 2px;
    border-radius: 50%;
    background: #1f97fb;
}
.light {
    background: #2c95f5;
}
.green {
    width: 18px;
    height: 18px;
    margin-top: 5px;
    border-radius: 50%;
    background: #6be283;
}
.square {
    width: 34px;
    height: 20px;
    margin-top: 4px;
    border-radius: 4px;
    background: #2e94fb;
}
.tray {
    width: 13px;
    height: 1px;
    margin: 7px 74px 0 auto;
    background: #fff;
}
.show-desktop {
    width: 14px;
    border: 1px solid #9ab4cc;
    background: #55799c;
}

/* floating level meter at the screen edge */
.meter {
    position: absolute;
    left: 1919px;
    top: 193px;
    width: 8px;
    height: 57px;
    border: 1px solid #666;
    border-radius: 4px;
    background: linear-gradient(#666 9px, transparent 9px), repeating-linear-gradient(#3fc46c 0 1px, #5c665f 1px 2px);
    box-shadow: 0 1px 3px #ccc;
}

/* properties dialog */
.dialog {
    position: absolute;
    left: 780px;
    top: 232px;
    width: 546px;
    height: 532px;
    padding: 0 7px 8px;
    border: 1px solid #2b3440;
    border-radius: 7px;
    box-shadow: inset 0 0 0 1px #e8f4ff;
    background:
        linear-gradient(#e0efff, #e9f4ff) 0 35px / 7px 121px no-repeat,
        linear-gradient(#cfe4fd, #e9f4ff) 100% 35px / 7px 121px no-repeat,
        linear-gradient(100deg, #e4f1ff 0, #d8eaff 190px, #b7dbff 250px, #b7dbff 380px, #cfe5ff 450px, #d3e7ff 100%) 0 0 / 100% 35px no-repeat,
        #b7dbff;
}
.dialog-title {
    display: flex;
    justify-content: space-between;
    height: 34px;
    padding-left: 1px;
}
.dialog-title span {
    margin-top: 6px;
    letter-spacing: .22px;
}
.dialog-close {
    display: flex;
    align-items: center;
    justify-content: center;
    width: 59px;
    height: 24px;
    border: 1px solid #5b2623;
    border-top: 0;
    border-radius: 0 0 4px 4px;
    box-shadow: inset 0 0 0 1px #f2b5ab;
    background: linear-gradient(#eda096, #df7f72 46%, #c43a26 50%, #cd4a35 75%, #de8571);
}
.dialog-body {
    height: 489px;
    padding: 8px 10px 0 8px;
    border: 1px solid #5d6b7c;
    background: #f0f0f0;
    font-family: "Liberation Mono", "Noto Sans CJK SC", monospace;
}
.tabs {
    display: flex;
    align-items: flex-end;
    height: 23px;
}
.tab {
    width: 71px;
    height: 21px;
    padding: 1px 0 0 4px;
    border: 1px solid #8c8e94;
    border-bottom: 0;
    box-shadow: inset 1px 1px 0 #fff, inset -1px 0 0 #fff;
    background: linear-gradient(#f2f2f2 50%, #dcdcdc 52%, #d0d0d0);
}
.tab.active {
    position: relative;
    z-index: 1;
    width: 63px;
    height: 24px;
    margin-bottom: -1px;
    padding-left: 7px;
    background: #fff;
    box-shadow: none;
}
.page {
    width: 510px;
    height: 414px;
    padding: 14px 15px 0 17px;
    border: 1px solid #898c95;
    box-shadow: 2px 2px 0 #fff;
    background: #fff;
}
.mono {
    font-size: 13.33px;
}
.device {
    display: flex;
    height: 53px;
}
.device span {
    margin: 2px 0 0 21px;
}
.big {
    width: 38px;
    height: 38px;
    margin-top: 5px;
}
.facts {
    display: grid;
    grid-template-columns: 125px auto;
    grid-auto-rows: 26.500px;
    padding-left: 60px;
}
.status {
    width: 476px;
    height: 205px;
    margin: 11px 0 0;
    padding: 2px 13px 0;
    border: 1px solid #d5dfe5;
    border-radius: 3px;
}
.status legend {
    position: relative;
    top: 1px;
    margin-left: -7px;
    padding: 0 3px;
}
.status-text {
    display: flex;
    justify-content: space-between;
    width: 448px;
    height: 131px;
    padding: 1px 2px 1px 1px;
    border: 1px solid #abcbe6;
    border-top-color: #3d7bad;
}
.message {
    height: 15px;
    margin: 2px 0 0 1px;
    border-left: 1px solid #000;
    line-height: 15px;
}
.scroll {
    display: flex;
    flex-direction: column;
    justify-content: space-between;
    align-items: center;
    width: 20px;
    padding: 8px 0;
    border-left: 1px solid #e3e3e3;
    background: #f0f0f0;
}
.buttons {
    display: flex;
    justify-content: flex-end;
    gap: 10px;
    margin: 9px -1px 0 0;
}
.btn {
    width: 98px;
    height: 24px;
    padding-top: 1px;
    border: 1px solid #707070;
    border-radius: 3px;
    box-shadow: inset 0 0 0 1px #fbfbfb;
    background: linear-gradient(#f2f2f2 48%, #dddddd 50%, #cfcfcf);
    text-align: center;
}
.default {
    border-color: #3c7fb1;
    box-shadow: inset 0 0 0 2px #48cdf5;
    background: linear-gradient(#ecf4f8 48%, #d4e4ee 50%, #bdd5e4);
}
.highlight {
    position: absolute;
    left: 79px;
    top: 36px;
    width: 69px;
    height: 38px;
    border: 3px solid #ec1420;
}

/* translucent mark over the lower right corner */
.watermark {
    position: absolute;
    left: 1480px;
    top: 840px;
}
.mark {
    fill: #fff;
    stroke: #fff;
    stroke-width: 2px;
    opacity: .8;
    filter: drop-shadow(0 0 1px #aaa) drop-shadow(0 0 .5px #bbb);
}
.wm-bai {
    font: bold 79px "Liberation Sans", sans-serif;
}
.wm-du {
    fill: #f6f6f6;
    stroke: #cfcfcf;
    stroke-width: 1.500px;
    font: 46px "Liberation Sans", sans-serif;
}
.wm-cn {
    font: 900 58px "Noto Sans CJK SC", sans-serif;
}
.wm-url {
    font: 39px "Open Sans", sans-serif;
    stroke-width: 1px;
}
```
